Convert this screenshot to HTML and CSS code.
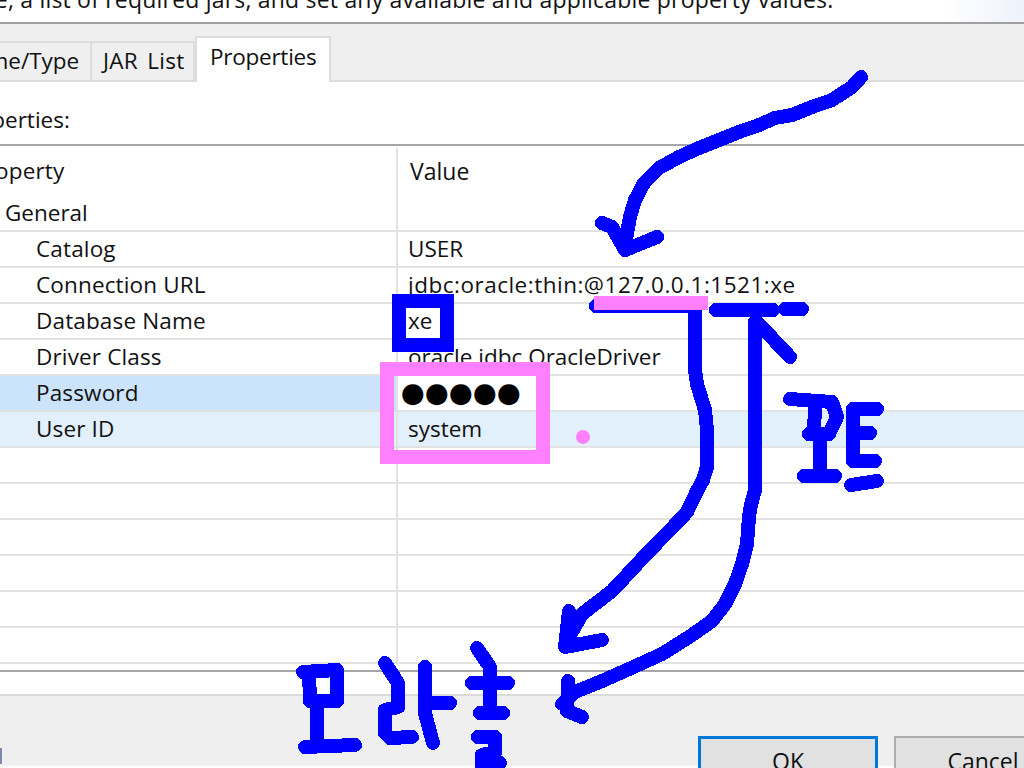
FILE: index.html
```html
<!DOCTYPE html>
<html lang="en">
<head>
    <meta charset="UTF-8" />
    <meta name="viewport" content="width=device-width, initial-scale=1.0" />
    <title>Connection Properties</title>
    <link rel="stylesheet" href="styles.css">
</head>
<body>
    <div class="intro">
        <p>name, a list of required jars, and set any available and applicable property values.</p>
    </div>
    <div class="tab-strip">
        <div class="tab tab-first">Name/Type</div>
        <div class="tab tab-jar">JAR List</div>
        <div class="tab tab-active">Properties</div>
    </div>
    <div class="pane">
        <div class="pane-label">Properties:</div>
        <div class="table">
            <div class="row row-head">
                <div class="name head-name">Property</div>
                <div class="value head-value">Value</div>
            </div>
            <div class="row">
                <div class="name name-group">General</div>
                <div class="value"></div>
            </div>
            <div class="row">
                <div class="name">Catalog</div>
                <div class="value">USER</div>
            </div>
            <div class="row">
                <div class="name">Connection URL</div>
                <div class="value value-url">jdbc:oracle:thin:@127.0.0.1:1521:xe</div>
            </div>
            <div class="row">
                <div class="name">Database Name</div>
                <div class="value">xe</div>
            </div>
            <div class="row">
                <div class="name">Driver Class</div>
                <div class="value">oracle.jdbc.OracleDriver</div>
            </div>
            <div class="row row-selected">
                <div class="name">Password</div>
                <div class="value dots">●●●●●</div>
            </div>
            <div class="row row-hover">
                <div class="name">User ID</div>
                <div class="value">system</div>
            </div>
            <div class="row"><div class="name"></div><div class="value"></div></div>
            <div class="row"><div class="name"></div><div class="value"></div></div>
            <div class="row"><div class="name"></div><div class="value"></div></div>
            <div class="row"><div class="name"></div><div class="value"></div></div>
            <div class="row"><div class="name"></div><div class="value"></div></div>
            <div class="row"><div class="name"></div><div class="value"></div></div>
        </div>
        <div class="table-end"></div>
    </div>
    <div class="footer">
        <div class="help-edge"></div>
        <button class="btn btn-default">OK</button>
        <button class="btn">Cancel</button>
    </div>

    <!-- paint scribbles on top of the dialog -->
    <svg class="marks" width="1024" height="768" viewBox="0 0 1024 768">
        <rect class="box-blue" x="399" y="301" width="48" height="44" />
        <rect class="box-pink" x="387" y="369" width="156" height="88" />

        <!-- arrow to the ip -->
        <path class="pen" d="M861 77 852 87 832 100 812 107 792 115 775 118 759 125 739 132 719 140 699 148 679 157 659 168 644 183 635 200 630 217 627 233 625 250" />
        <path class="pen" d="M602 223 612 227 625 250 657 237" />

        <!-- ip to label -->
        <path class="pen" d="M596 306H695V370L697 384 705 410 707 430V467L703 480 697 491 687 512 673 527 659 541 639 562 612 591 582 614 569 637" />
        <path class="pen" d="M569 611 565 647 602 640" />

        <!-- port to label -->
        <path class="pen" d="M716 310H773M785 309H802" />
        <path class="pen" d="M757 322 790 357" />
        <path class="pen" d="M755 322V490L751 505 749 517 747 544 742 564 735 584 725 604 712 621 689 637 662 654 629 669 602 681 575 692 562 704" />
        <path class="pen" d="M568 681 567 711 582 717" />

        <!-- handwriting: port -->
        <path class="pen" d="M790 399 832 402 837 417 829 434H809M815 404 814 434M820 434V474M804 476H835" />
        <path class="pen" d="M877 409H853V461H875M853 433H870M851 485 877 481" />

        <!-- handwriting: the word under the arrows -->
        <path class="pen" d="M303 672 337 670V701H310L309 672M317 707V743M305 747 355 745" />
        <path class="pen" d="M385 663 398 683V707L385 710V733L390 738 412 737M425 667V713L433 743M427 703H450" />
        <path class="pen" d="M477 648 490 667V710M472 683H508M480 713H503M478 737H495V752L482 755V768L500 763" />

        <rect class="pink-fill" x="594" y="296" width="114" height="14" />
        <circle class="pink-fill" cx="583" cy="437" r="7" />
    </svg>
</body>
</html>
```

FILE: styles.css
```css
html, body {
    margin: 0;
    padding: 0;
    height: 768px;
    overflow: hidden;
}
body {
    position: relative;
    width: 1024px;
    background-color: #fff;
    color: #111;
    font-family: "Open Sans", "Noto Sans", Arial, sans-serif;
    font-size: 22.5px;
}
.intro {
    height: 22px;
    overflow: hidden;
    border-bottom: 2px solid #a0a0a0;
    background: linear-gradient(90deg, #fff 92%, #eef2fb 100%);
}
.intro p {
    margin: -19px 0 0 -54px;
    font-size: 23px;
    letter-spacing: .2px;
    line-height: 36px;
    white-space: nowrap;
}
.tab-strip {
    display: flex;
    align-items: flex-end;
    height: 56px;
    background-color: #efefef;
    border-bottom: 2px solid #dcdcdc;
}
.tab {
    box-sizing: border-box;
    height: 39px;
    line-height: 36px;
    white-space: nowrap;
    border: 2px solid #dcdcdc;
    border-bottom: none;
}
.tab-first {
    width: 92px;
    overflow: hidden;
    text-indent: -42px;
    border-left: none;
}
.tab-jar {
    width: 103px;
    padding-left: 11px;
    letter-spacing: .3px;
    word-spacing: 3px;
    border-left: none;
}
.tab-active {
    height: 46px;
    margin-bottom: -2px;
    width: 136px;
    line-height: 38px;
    padding-left: 13px;
    letter-spacing: -.25px;
    background-color: #fff;
}
.pane-label {
    height: 62px;
    line-height: 76px;
    margin-left: -45px;
    white-space: nowrap;
}
.table {
    border-top: 2px solid #a5a5ab;
}
.row {
    display: flex;
    box-sizing: border-box;
    height: 36px;
    border-bottom: 2px solid #e2e2e2;
    line-height: 33px;
}
.row-head {
    height: 50px;
    border-bottom: none;
    line-height: 50px;
}
.name {
    box-sizing: border-box;
    width: 398px;
    flex: none;
    padding-left: 36px;
    letter-spacing: .15px;
    border-right: 2px solid #e2e2e2;
    white-space: nowrap;
}
.value {
    flex: 1;
    padding-left: 10px;
    white-space: nowrap;
}
.value-url {
    letter-spacing: .5px;
}
.head-name {
    padding-left: 0;
    text-indent: -28px;
    margin-top: 2px;
    line-height: 46px;
}
.head-value {
    padding-left: 12px;
    font-size: 23px;
}
.name-group {
    padding-left: 5px;
    letter-spacing: 0;
}
.row-selected .name {
    background-color: #cce4fb;
}
.row-hover {
    background-color: #e2f0fc;
}
.dots {
    padding-left: 3px;
    font-family: "DejaVu Sans", sans-serif;
    font-size: 27.5px;
    color: #000;
    line-height: 33px;
}
.table-end {
    height: 6px;
    border-bottom: 2px solid #a5a5ab;
}
.pane {
    height: 614px;
    box-sizing: border-box;
    border-bottom: 2px solid #dadada;
}
.footer {
    display: flex;
    align-items: flex-start;
    gap: 16px;
    height: 70px;
    box-sizing: border-box;
    padding-top: 40px;
    background-color: #efefef;
}
.help-edge {
    width: 2px;
    height: 16px;
    margin-top: 12px;
    margin-right: auto;
    background-color: #7d8aa6;
}
.btn {
    flex: none;
    box-sizing: border-box;
    width: 178px;
    height: 46px;
    margin: 0 -48px 0 0;
    padding: 4px 0 0;
    border: 2px solid #adadad;
    background-color: #e1e1e1;
    color: #111;
    font-family: inherit;
    font-size: 23px;
}
.btn-default {
    width: 180px;
    margin-right: 0;
    border: 3px solid #0078d7;
}
.marks {
    position: absolute;
    top: 0;
    left: 0;
    pointer-events: none;
}
.pen {
    fill: none;
    stroke: #00f;
    stroke-width: 14;
    stroke-linecap: round;
    stroke-linejoin: round;
    shape-rendering: crispEdges;
}
.box-blue {
    fill: none;
    stroke: #00f;
    stroke-width: 14;
}
.box-pink {
    fill: none;
    stroke: #ff80ff;
    stroke-width: 14;
}
.pink-fill {
    fill: #ff80ff;
}
```
